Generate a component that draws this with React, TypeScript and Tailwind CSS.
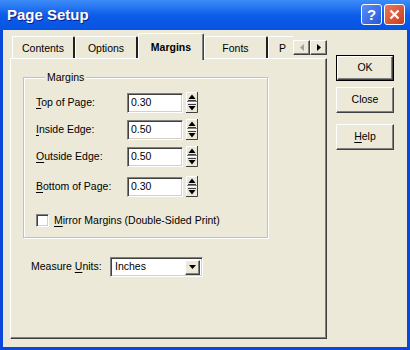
import React from 'react';

const raised =
  'border border-t-white border-l-white border-r-[#404040] border-b-[#404040] shadow-[inset_-1px_-1px_0_#808080]';
const sunken =
  'border border-t-[#808080] border-l-[#808080] border-b-white border-r-white shadow-[inset_1px_1px_0_#404040,inset_-1px_-1px_0_#D4D0C8]';

const Spinner: React.FC = () => (
  <svg width="12" height="21" viewBox="0 0 12 21" className="shrink-0">
    <rect x="0" y="0" width="12" height="21" fill="#ECE9D8" />
    <path d="M0.5 20V0.5H11" stroke="#fff" fill="none" />
    <path d="M11.5 0V20.5H0" stroke="#404040" fill="none" />
    <path d="M1 9.5H11" stroke="#808080" />
    <path d="M1 10.5H11" stroke="#fff" />
    <polygon points="6,2.5 2.5,7 9.5,7" fill="#000" />
    <rect x="2" y="8" width="8" height="1" fill="#404040" />
    <rect x="2" y="12" width="8" height="1" fill="#404040" />
    <polygon points="2.5,14 9.5,14 6,18.5" fill="#000" />
  </svg>
);

const Field: React.FC<{ label: string; mn: string; rest: string; value: string; className?: string }> = ({
  mn,
  rest,
  value,
  className,
}) => (
  <div className={`flex items-center h-[21px] ${className ?? ''}`}>
    <span className="w-[91px]">
      <span className="underline underline-offset-2">{mn}</span>
      {rest}
    </span>
    <div className={`w-[56px] h-[20px] bg-white ${sunken} flex items-center pl-[3px]`}>{value}</div>
    <div className="ml-[3px]">
      <Spinner />
    </div>
  </div>
);

const tabs = [
  { name: 'Contents', w: 'w-[63px]' },
  { name: 'Options', w: 'w-[63px]' },
  { name: 'Margins', w: 'w-[66px]', active: true },
  { name: 'Fonts', w: 'w-[64px]' },
];

export default function App() {
  return (
    <div className="w-[410px] h-[350px] flex flex-col bg-[#0B47D9] font-['Liberation_Sans',Arial,sans-serif] text-[10.5px] text-black select-none">
      {/* title bar */}
      <div className="h-[30px] shrink-0 flex items-center justify-between pl-[7px] pr-[5px] bg-linear-to-b from-[#3D8CF8] via-[#0C5DE9] to-[#0553E2]">
        <span className="text-white font-bold text-[15px] [text-shadow:1px_1px_0_#0A1F8A]">Page Setup</span>
        <div className="flex gap-[2px] -mt-[1px]">
          <div className="w-[21px] h-[21px] rounded-[3px] border border-white bg-linear-to-br from-[#5C8EF5] to-[#2458D8] flex items-center justify-center text-white font-bold text-[15px] leading-none">
            ?
          </div>
          <div className="w-[21px] h-[21px] rounded-[3px] border border-white bg-linear-to-br from-[#E8785C] to-[#C83A1C] flex items-center justify-center">
            <svg width="11" height="11" viewBox="0 0 11 11">
              <path d="M1.5 1.5L9.5 9.5M9.5 1.5L1.5 9.5" stroke="#fff" strokeWidth="2.2" />
            </svg>
          </div>
        </div>
      </div>

      {/* client area */}
      <div className="flex-1 mx-[3px] mb-[3px] bg-[#ECE9D8] flex">
        <div className="pl-[7px] pt-[3px] flex flex-col">
          {/* tabs */}
          <div className="w-[317px] h-[25px] flex items-end pl-[2px]">
            {tabs.map(t =>
              t.active ? (
                <div
                  key={t.name}
                  className={`${t.w} h-[27px] -mb-[2px] relative z-10 bg-[#ECE9D8] border-t border-l border-white border-r border-r-[#404040] shadow-[inset_-1px_0_0_#808080] rounded-t-[2px] flex justify-center pt-[6px] font-bold`}
                >
                  {t.name}
                </div>
              ) : (
                <div
                  key={t.name}
                  className={`${t.w} h-[22px] border-t border-l border-white border-r-2 border-r-[#202020] rounded-t-[2px] flex justify-center pt-[4px]`}
                >
                  {t.name}
                </div>
              ),
            )}
            <div className="w-[25px] h-[22px] border-t border-l border-white overflow-hidden pt-[4px] pl-[10px]">P</div>
            <div className="flex mb-[3px]">
              <div className={`w-[17px] h-[15px] bg-[#ECE9D8] ${raised} flex items-center justify-center`}>
                <svg width="4" height="7" viewBox="0 0 4 7">
                  <polygon points="4,0 0,3.5 4,7" fill="#A0A0A0" />
                </svg>
              </div>
              <div className={`w-[17px] h-[15px] bg-[#ECE9D8] ${raised} flex items-center justify-center`}>
                <svg width="4" height="7" viewBox="0 0 4 7">
                  <polygon points="0,0 4,3.5 0,7" fill="#000" />
                </svg>
              </div>
            </div>
          </div>

          {/* panel */}
          <div className={`w-[317px] h-[281px] ${raised} pl-[12px] pt-[12px] flex flex-col`}>
            <fieldset className="w-[245px] h-[167px] border border-[#C5C2B2] shadow-[inset_1px_1px_0_#fff,1px_1px_0_#fff] pl-[12px]">
              <legend className="ml-[9px] px-[2px] bg-[#ECE9D8] leading-[12px]">Margins</legend>
              <Field label="Top of Page" mn="T" rest="op of Page:" value="0.30" className="mt-[9px]" />
              <Field label="Inside Edge" mn="I" rest="nside Edge:" value="0.50" className="mt-[6px]" />
              <Field label="Outside Edge" mn="O" rest="utside Edge:" value="0.50" className="mt-[6px]" />
              <Field label="Bottom of Page" mn="B" rest="ottom of Page:" value="0.30" className="mt-[9px]" />
              <div className="flex items-center mt-[16px]">
                <div className={`w-[13px] h-[13px] bg-white ${sunken}`} />
                <span className="ml-[5px]">
                  <span className="underline underline-offset-2">M</span>irror Margins (Double-Sided Print)
                </span>
              </div>
            </fieldset>

            <div className="flex items-center mt-[19px] ml-[8px]">
              <span className="w-[79px]">
                Measure <span className="underline underline-offset-2">U</span>nits:
              </span>
              <div className={`w-[93px] h-[20px] bg-white ${sunken} flex items-center justify-between pl-[4px] pr-[2px]`}>
                <span>Inches</span>
                <div className={`w-[15px] h-[15px] bg-[#ECE9D8] ${raised} flex items-center justify-center`}>
                  <svg width="7" height="4" viewBox="0 0 7 4">
                    <polygon points="0,0 7,0 3.5,4" fill="#000" />
                  </svg>
                </div>
              </div>
            </div>
          </div>
        </div>

        {/* buttons */}
        <div className="ml-[9px] pt-[25px] flex flex-col">
          <div className="border border-black">
            <div className={`w-[56px] h-[24px] ${raised} flex items-center justify-center`}>OK</div>
          </div>
          <div className={`mt-[6px] w-[58px] h-[26px] ${raised} flex items-center justify-center`}>Close</div>
          <div className={`mt-[11px] w-[58px] h-[26px] ${raised} flex items-center justify-center`}>
            <span>
              <span className="underline underline-offset-2">H</span>elp
            </span>
          </div>
        </div>
      </div>
    </div>
  );
}
